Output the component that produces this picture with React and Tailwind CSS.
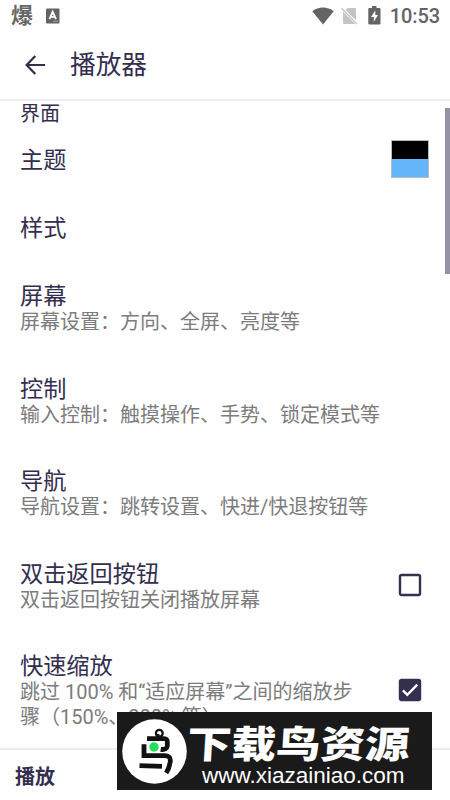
function StatusBar() {
  return (
    <header className="flex h-[31px] items-center justify-between pl-[11px] pr-[10px] text-[#646464]">
      <div className="flex items-center gap-[13px]">
        <span className="text-[22px] font-bold leading-[30px] text-[#666]">爆</span>
        <svg width="14" height="16" viewBox="0 0 14 16">
          <rect x="0" y="0.5" width="13.5" height="15" rx="1" fill="#646464" />
          <path d="M3.5 11.2 6.7 3.8 10 11.2M4.8 8.8h3.8" fill="none" stroke="#fff" strokeWidth="1.8" />
          <path d="M7 13.3h5" stroke="#aaa" strokeWidth="0.9" />
        </svg>
      </div>
      <div className="flex items-center">
        <svg width="22" height="18" viewBox="0 0 22 18">
          <path d="M0.3 4.2C6.5-.8 15.5-.8 21.7 4.2L11 17.5Z" fill="#646464" />
        </svg>
        <svg className="ml-[7px]" width="17" height="18" viewBox="0 0 17 18">
          <path d="M6.5 1H14a1 1 0 0 1 1 1V13.2L4.6 2.9ZM2 4.4 14.4 17H3a1 1 0 0 1-1-1Z" fill="#c4c4c4" />
          <path d="M.5 1.3 16 17.1" stroke="#c4c4c4" strokeWidth="1.3" />
        </svg>
        <svg className="-mt-px ml-[10px]" width="13" height="19" viewBox="0 0 13 19">
          <path d="M4 0h4.500v2H11.500a1 1 0 0 1 1 1v14.500a1 1 0 0 1-1 1H1.300a1 1 0 0 1-1-1V3a1 1 0 0 1 1-1H4Z" fill="#646464" />
          <path d="M7.300 4.500 3 11h2.800v4.800L10 9H7.300Z" fill="#fff" />
        </svg>
        <span className="ml-[9px] text-[20px] font-medium leading-[28px] tracking-[-0.1px]">10:53</span>
      </div>
    </header>
  );
}

function Row({ title, lines = [], children }) {
  return (
    <div className="flex items-center justify-between py-5 pl-5 pr-[21px]">
      <div>
        <div className="text-[23.200px] leading-[28px]">{title}</div>
        {lines.map((line) => (
          <div key={line} className="whitespace-nowrap text-[20px] leading-[24.500px] text-[#7c7c7c] first-of-type:mt-0">
            {line}
          </div>
        ))}
      </div>
      {children}
    </div>
  );
}

function Checkbox({ checked }) {
  return (
    <svg className="-mt-px mr-[7px] shrink-0" width="24" height="24" viewBox="0 0 24 24">
      <rect x="2" y="2" width="20" height="20" rx="1.500" fill={checked ? "#352f50" : "#fff"} stroke="#352f50" strokeWidth="2.400" />
      {checked && <path d="M4.900 12.300 9.300 16.800 19.300 6.700" fill="none" stroke="#fff" strokeWidth="2.400" />}
    </svg>
  );
}

function Watermark() {
  return (
    <div className="absolute left-[117px] top-[712px] flex h-[78px] w-[315px] items-center bg-[#1a1a1a] pl-[5px] text-white">
      <svg className="shrink-0" width="65" height="65" viewBox="0 0 65 65">
        <circle cx="32.500" cy="32.500" r="32.300" fill="#fff" />
        <g fill="none" stroke="#111" strokeWidth="4.800">
          <circle cx="37.300" cy="14.200" r="3.400" strokeWidth="2.300" />
          <path d="M36.200 19v-4" strokeWidth="2.600" />
          <path d="M25 19.600H42Q45.500 19.600 45.300 23V27Q44.800 31.300 38.700 30.300" />
          <path d="M22 25.300V36.600H42.500Q48.800 36.600 48.300 42Q47.500 49 44.200 54" />
          <path d="M17.500 46.600 40 47.300" />
        </g>
        <circle cx="32" cy="28" r="4.700" fill="#20df5b" />
      </svg>
      <div className="flex flex-col pt-[8px]">
        <div className="relative top-[2px] h-[41px] origin-center -skew-x-3 scale-y-[0.850] whitespace-nowrap text-[44.500px] font-black leading-[43px]">下载鸟资源</div>
        <div className="pl-[15px] font-['Liberation_Sans',sans-serif] text-[22.500px] leading-[26px]">www.xiazainiao.com</div>
      </div>
    </div>
  );
}

export default function App() {
  return (
    <main className="relative h-[800px] w-[450px] overflow-hidden bg-[#fefefe] font-['Roboto','Noto_Sans_CJK_SC',sans-serif] text-[#332e4e]">
      <StatusBar />
      <div className="flex h-[70px] items-center border-b-2 border-[#efefef] pl-[25px]">
        <svg width="21" height="20" viewBox="0 0 21 20">
          <path d="M20 10H2M10.300 1 1.600 10l8.700 9" fill="none" stroke="#332e4e" strokeWidth="2.200" />
        </svg>
        <h1 className="ml-6 text-[25.700px] leading-[32px]">播放器</h1>
      </div>
      <section>
        <h2 className="h-[25px] pl-5 text-[20px] leading-[26px]">界面</h2>
        <Row title="主题">
          <div className="-mb-[4px] -mt-[6px] flex h-[38px] w-[38px] flex-col border border-[#b4bcc4]">
            <div className="flex-1 bg-black" />
            <div className="flex-1 bg-[#65b5fb]" />
          </div>
        </Row>
        <Row title="样式" />
        <Row title="屏幕" lines={["屏幕设置：方向、全屏、亮度等"]} />
        <Row title="控制" lines={["输入控制：触摸操作、手势、锁定模式等"]} />
        <Row title="导航" lines={["导航设置：跳转设置、快进/快退按钮等"]} />
        <Row title="双击返回按钮" lines={["双击返回按钮关闭播放屏幕"]}>
          <Checkbox checked={false} />
        </Row>
        <Row title="快速缩放" lines={["跳过 100% 和“适应屏幕”之间的缩放步", "骤（150%、200% 等）"]}>
          <Checkbox checked />
        </Row>
      </section>
      <section className="-mt-px border-t-2 border-[#ececec] pl-[15px] pt-[14px]">
        <h2 className="text-[20px] font-bold leading-[26px]">播放</h2>
      </section>
      <div className="absolute left-[445px] top-[108px] h-[166px] w-[5px] bg-[#9592a5]" />
      <Watermark />
    </main>
  );
}
